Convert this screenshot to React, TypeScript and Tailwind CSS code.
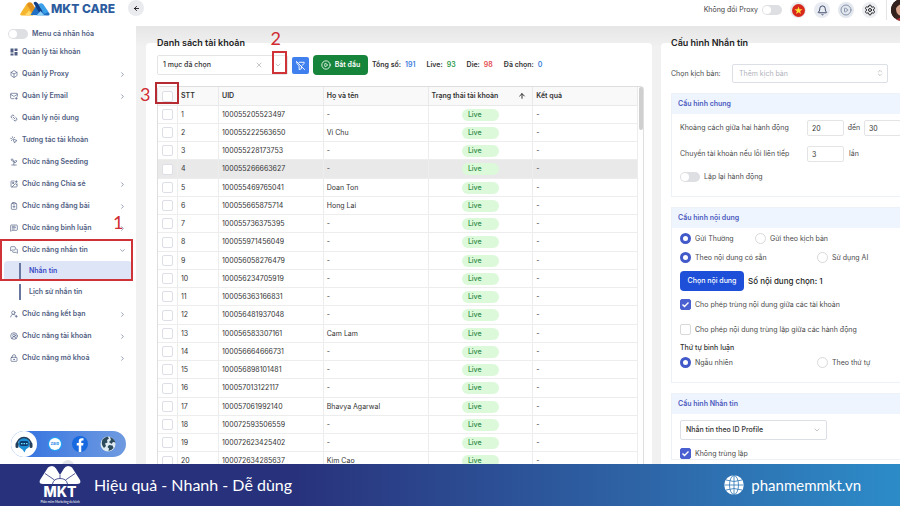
import type { ReactNode } from "react";
import {
  ArrowLeft,
  ArrowUp,
  Bell,
  Box,
  ChevronDown,
  ChevronRight,
  ChevronsUpDown,
  CirclePlay,
  CircleUserRound,
  ClipboardPlus,
  ImagePlus,
  Link2,
  LockKeyhole,
  MailPlus,
  MessageSquareText,
  MessagesSquare,
  MousePointerClick,
  Settings,
  Sprout,
  UserRoundPlus,
  X,
} from "lucide-react";

const menu = [
  { label: "Quản lý tài khoản", icon: <TilesIcon /> },
  { label: "Quản lý Proxy", icon: <Box className="size-2" />, more: true },
  { label: "Quản lý Email", icon: <MailPlus className="size-2" />, more: true },
  { label: "Quản lý nội dung", icon: <Link2 className="size-2 rotate-45" /> },
  { label: "Tương tác tài khoản", icon: <MousePointerClick className="size-2" /> },
  { label: "Chức năng Seeding", icon: <Sprout className="size-2 -scale-x-100" /> },
  { label: "Chức năng Chia sẻ", icon: <ImagePlus className="size-2" />, more: true },
  { label: "Chức năng đăng bài", icon: <ClipboardPlus className="size-2" />, more: true },
  { label: "Chức năng bình luận", icon: <MessageSquareText className="size-2" />, more: true },
];

const menuEnd = [
  { label: "Chức năng kết bạn", icon: <UserRoundPlus className="size-2" />, more: true },
  { label: "Chức năng tài khoản", icon: <CircleUserRound className="size-2" />, more: true },
  { label: "Chức năng mở khoá", icon: <LockKeyhole className="size-2" />, more: true },
];

const accounts = [
  ["100055205523497", "-"],
  ["100055222563650", "Vi Chu"],
  ["100055228173753", "-"],
  ["100055266663627", "-"],
  ["100055469765041", "Doan Ton"],
  ["100055665875714", "Hong Lai"],
  ["100055736375395", "-"],
  ["100055971456049", "-"],
  ["100056058276479", "-"],
  ["100056234705919", "-"],
  ["100056363166831", "-"],
  ["100056481937048", "-"],
  ["100056583307161", "Cam Lam"],
  ["100056664666731", "-"],
  ["100056898101481", "-"],
  ["100057013122117", "-"],
  ["100057061992140", "Bhavya Agarwal"],
  ["100072593506559", "-"],
  ["100072623425402", "-"],
  ["100072634285637", "Kim Cao"],
];

const stats = [
  { label: "Tổng số:", value: 191, color: "text-[#3b7de0]" },
  { label: "Live:", value: 93, color: "text-[#2f9a4c]" },
  { label: "Die:", value: 98, color: "text-[#e5484d]" },
  { label: "Đã chọn:", value: 0, color: "text-[#3b7de0]" },
];

function TilesIcon() {
  return (
    <svg viewBox="0 0 16 16" className="size-2" fill="currentColor">
      <path d="M1 1h6v8H1zM9 1h6v5H9zM1 11h6v4H1zM9 8h6v7H9z" />
    </svg>
  );
}

function FilterOffIcon() {
  return (
    <svg viewBox="0 0 24 24" className="size-[11px]" fill="none" stroke="currentColor" strokeWidth="2" strokeLinecap="round" strokeLinejoin="round">
      <path d="m3 3 18 18M9 5h11v1.500q0 .8-.6 1.400L15.500 12M14 14v5l-5 2v-8L4.500 8Q4 7.500 4 6.800V5" />
    </svg>
  );
}

function CareLogo() {
  return (
    <svg viewBox="0 0 60 32" className="h-4 w-[30px]">
      <path d="M1 25 13 6q4-6 9 0l10 15-6 8H4q-5 0-3-4z" fill="#f5b52c" />
      <path d="M17 3q6-2 9 4l7 11-6 9-13-19z" fill="#e0901f" />
      <path d="m9 29 9-10 8 10z" fill="#ffd970" />
      <path d="M21 28 32 10l8 9 6-9 13 15q1 4-4 4z" fill="#1f6fc4" />
      <path d="M27 4q4-5 9 1l10 14-6 7z" fill="#123f86" />
      <path d="M37 7q5-5 10 0l10 15-9 4z" fill="#3ba0ea" />
      <path d="m33 29 8-9 8 9z" fill="#8fd0f7" />
    </svg>
  );
}

function MktLogo() {
  return (
    <svg viewBox="0 0 84 36" className="h-[18px] w-[42px]">
      <path d="M18 3q3-3 8-3 5 0 8 5l8 13 8-13q3-5 8-5 5 0 8 3l16 25q3 8-6 8H8q-9 0-6-8z" fill="#fff" />
      <path d="M27 36q2-11 15-11t15 11M42 18v7M31 28 12 15M53 28l19-13" fill="none" stroke="#28327c" strokeWidth="1.6" />
    </svg>
  );
}

function GlobeGrid() {
  return (
    <svg viewBox="0 0 40 40" className="size-5" fill="none" stroke="#2a74b4" strokeWidth="1.6">
      <circle cx="20" cy="20" r="19.5" fill="#fff" stroke="none" />
      <ellipse cx="20" cy="20" rx="9" ry="19" />
      <path d="M20 1v38M1 20h38M4 10q16 6 32 0M4 30q16-6 32 0" />
    </svg>
  );
}

function Toggle({ label, className }: { label: string; className: string }) {
  return (
    <label className={"flex items-center " + className}>
      <input type="checkbox" role="switch" className="sr-only" />
      <span className="flex h-[10px] w-5 shrink-0 rounded-full bg-[#dedfe3] p-px">
        <span className="size-2 rounded-full bg-white" />
      </span>
      {label}
    </label>
  );
}

function Radio({ name, label, checked }: { name: string; label: string; checked?: boolean }) {
  return (
    <label className="flex items-center gap-1">
      <input
        type="radio"
        name={name}
        defaultChecked={checked}
        className="size-[11px] shrink-0 appearance-none rounded-full border border-[#d9d9d9] bg-white checked:border-[3px] checked:border-[#4259c9]"
      />
      {label}
    </label>
  );
}

function Check({ label, checked }: { label: string; checked?: boolean }) {
  return (
    <label className="flex h-[11px] items-center gap-1">
      <span className="relative flex size-[11px] shrink-0">
        <input
          type="checkbox"
          defaultChecked={checked}
          className="size-[11px] appearance-none rounded-xs border border-[#d9d9d9] bg-white checked:border-[#4a60d0] checked:bg-[#4a60d0]"
        />
        {checked && (
          <svg viewBox="0 0 11 11" className="pointer-events-none absolute inset-0" fill="none" stroke="#fff" strokeWidth="1.4">
            <path d="m2.500 5.500 2 2 4-4" />
          </svg>
        )}
      </span>
      {label}
    </label>
  );
}

function Card({ title, children }: { title: string; children: ReactNode }) {
  return (
    <section className="-mr-5 border border-[#edf1f8] bg-white">
      <h3 className="flex h-5 items-center bg-[#eff5ff] px-[6px] font-semibold text-[#4a59bd]">{title}</h3>
      {children}
    </section>
  );
}

function NumberBox({ label, value }: { label: string; value: number }) {
  return (
    <input
      aria-label={label}
      defaultValue={value}
      className="h-4 w-[37px] shrink-0 rounded-xs border border-[#e4e4e7] px-1 text-[#333]"
    />
  );
}

function MenuItem({ label, icon, more }: { label: string; icon: ReactNode; more?: boolean }) {
  return (
    <a href="#" className="flex h-[22px] items-center gap-1 px-[10px]">
      {icon}
      <span className="flex-1">{label}</span>
      {more && <ChevronRight className="size-[7px]" />}
    </a>
  );
}

function Sidebar() {
  return (
    <aside className="relative z-10 flex w-[136px] shrink-0 flex-col bg-white text-[7px] font-semibold text-[#4f5d82]">
      <div className="flex h-[18px] items-center gap-px pl-5">
        <CareLogo />
        <span className="text-[12px] font-extrabold text-[#2c5c9e]">MKT CARE</span>
      </div>
      <button
        aria-label="Thu gọn menu"
        className="absolute top-0 -right-2 flex size-4 items-center justify-center rounded-full bg-[#e9ebef] text-[#111]"
      >
        <ArrowLeft className="size-[7px]" strokeWidth={3} />
      </button>

      <Toggle label="Menu cá nhân hóa" className="mt-[11px] mb-[2px] gap-1 px-2" />

      <nav className="flex flex-col">
        {menu.map((item) => (
          <MenuItem key={item.label} {...item} />
        ))}
        <div className="relative">
          <a href="#" className="flex h-[22px] items-center gap-1 px-[10px]">
            <MessagesSquare className="size-2" />
            <span className="flex-1">Chức năng nhắn tin</span>
            <ChevronDown className="size-[7px]" />
          </a>
          <a href="#" className="mx-1 flex h-5 items-center rounded-sm bg-[#dde5f7] pl-[15px] text-[#3949c6]">
            <span className="flex h-4 items-center border-l-2 border-[#6877a0] pl-2">Nhắn tin</span>
          </a>
          <span className="pointer-events-none absolute inset-0 right-[3px] border-2 border-[#cf3338]" />
          <span className="absolute -top-[27px] left-[113px] font-['Lato'] text-[18px] leading-5 font-normal text-[#cf2b30]">1</span>
        </div>
        <a href="#" className="flex h-[22px] items-center pl-[19px]">
          <span className="flex h-4 items-center border-l-2 border-[#6877a0] pl-2">Lịch sử nhắn tin</span>
        </a>
        {menuEnd.map((item) => (
          <MenuItem key={item.label} {...item} />
        ))}
      </nav>

      <div className="mt-auto mr-[10px] mb-[7px] ml-[11px] flex h-[26px] items-center justify-between rounded-full bg-linear-to-r from-[#2f6fe0] to-[#6f9ae0] pr-[10px]">
        <a href="#" aria-label="Hỗ trợ" className="flex size-[26px] items-center justify-center rounded-full bg-white">
          <svg viewBox="0 0 36 36" className="size-[18px]">
            <circle cx="18" cy="17" r="12" fill="#1f8fd6" />
            <path d="M13 26h10l-4 9z" fill="#1f8fd6" />
            <path d="M4 19a14 14 0 0 1 28 0" fill="none" stroke="#233f5c" strokeWidth="3" />
            <rect x="1" y="15" width="6" height="11" rx="3" fill="#233f5c" />
            <rect x="29" y="15" width="6" height="11" rx="3" fill="#233f5c" />
            <rect x="9" y="12" width="18" height="10" rx="4" fill="#0d3d70" />
            <path d="M12 17h3m2 0h3m2 0h3" stroke="#6fe3ff" strokeWidth="2.5" />
          </svg>
        </a>
        <a
          href="#"
          className="flex size-3 items-center justify-center rounded-full bg-white text-[4px] font-bold text-[#1a86e8] ring-1 ring-[#1ea5f5]"
        >
          Zalo
        </a>
        <a href="#" aria-label="Facebook">
          <svg viewBox="0 0 32 32" className="size-4">
            <circle cx="16" cy="16" r="16" fill="#1769e0" />
            <path d="M13.500 32V19H9.500v-5h4v-3.500q0-6 6-6h3.500v4.500h-2.500q-2 0-2 2V14H23l-.8 5h-3.700v13z" fill="#fff" />
          </svg>
        </a>
        <a href="#" aria-label="Website">
          <svg viewBox="0 0 32 32" className="size-4">
            <circle cx="16" cy="16" r="15" fill="#dfeaf2" />
            <path
              d="M5 7q5-5 10-6l3 4-4 3 1 5-5 2 2 5-4 4Q1 17 5 7zM20 2q8 2 11 11l-5-1-3 4-5-4 4-4zM18 18l7 1 2 5q-5 6-10 6l1-5-3-3z"
              fill="#2d4a5c"
            />
          </svg>
        </a>
      </div>
      <span className="absolute -bottom-2 left-[62px] size-3 rounded-full bg-[#e2e4ea]" />
    </aside>
  );
}

function TopBar() {
  return (
    <header className="flex h-[26px] shrink-0 items-start justify-end overflow-hidden bg-white text-[#444]">
      <div className="-mr-[13px] flex h-5 items-center gap-2">
        <label className="flex items-center gap-1">
          Không đổi Proxy
          <input type="checkbox" role="switch" className="sr-only" />
          <span className="flex h-[10px] w-5 rounded-full bg-[#dedfe3] p-px">
            <span className="size-2 rounded-full bg-white" />
          </span>
        </label>
        <button aria-label="Ngôn ngữ" className="flex size-4 items-center justify-center rounded-full bg-[#e8eaee]">
          <svg viewBox="0 0 26 26" className="size-[13px]">
            <circle cx="13" cy="13" r="13" fill="#d8281e" />
            <path d="m13 5 2 5.700h6l-4.800 3.600 1.800 5.700-5-3.500L8 20l1.800-5.700L5 10.700h6z" fill="#ffdf3a" />
          </svg>
        </button>
        <button aria-label="Thông báo" className="flex size-4 items-center justify-center rounded-full bg-[#e8ebf1] text-[#2d3c5e]">
          <Bell className="size-[11px]" />
        </button>
        <button aria-label="Hướng dẫn" className="flex size-4 items-center justify-center rounded-full bg-[#e3e7ee] text-[#8793ac]">
          <CirclePlay className="size-3" />
        </button>
        <button aria-label="Cài đặt" className="flex size-4 items-center justify-center rounded-full bg-[#eceef2] text-[#222]">
          <Settings className="size-3" />
        </button>
        <span className="-mr-1 h-5 w-px bg-[#e4e4e7]" />
        <svg viewBox="0 0 22 22" className="size-[22px] rounded-full bg-[#3a2620]">
          <ellipse cx="11" cy="10" rx="6" ry="7" fill="#d9a68d" />
          <path d="M0 0h22v5Q10 2 5 9v6L3 22H0z" fill="#33211d" />
          <path d="M3 22q8-7 17 0z" fill="#b0303a" />
        </svg>
      </div>
    </header>
  );
}

function AccountList() {
  const head = "h-[19px] border-r border-b border-[#e9e9e9] bg-[#f9f9f9] px-[3px] text-left font-semibold";
  const cell = "h-[18px] border-r border-b border-[#ededed] px-[3px] group-nth-[4n]:h-[19px]";

  return (
    <section className="flex min-w-0 flex-1 flex-col rounded-t-sm bg-white pr-2 pl-[11px]">
      <h2 className="-mt-2 text-[9px] leading-4 font-semibold text-[#222]">Danh sách tài khoản</h2>

      <div className="mt-1 flex items-center gap-1">
        <div className="relative w-[131px]">
          <select
            aria-label="Danh mục"
            className="block h-5 w-full appearance-none rounded-xs border border-[#e4e4e7] pl-[5px] text-[7px] font-medium text-[#333]"
          >
            <option>1 mục đã chọn</option>
          </select>
          <X className="pointer-events-none absolute top-[6px] right-[25px] size-2 text-[#aaa]" />
          <ChevronDown className="pointer-events-none absolute top-[6px] right-[6px] size-2 text-[#aaa]" />
          <span className="pointer-events-none absolute -top-1 right-px h-[23px] w-[15px] border-2 border-[#cf3338]" />
          <span className="absolute -top-[27px] right-[7px] font-['Lato'] text-[18px] leading-5 text-[#cf2b30]">2</span>
        </div>
        <button aria-label="Bỏ lọc" className="flex size-[17px] shrink-0 items-center justify-center rounded-xs bg-[#3f80ee] text-white">
          <FilterOffIcon />
        </button>
        <button className="flex h-5 w-[55px] shrink-0 items-center justify-center gap-1 rounded-sm bg-[#16843a] font-semibold text-white">
          <CirclePlay className="size-[10px]" />
          Bắt đầu
        </button>
        <dl className="flex gap-[11px] font-semibold whitespace-nowrap">
          {stats.map(({ label, value, color }) => (
            <div key={label} className="flex gap-1">
              <dt>{label}</dt>
              <dd className={color}>{value}</dd>
            </div>
          ))}
        </dl>
      </div>

      <div className="relative mt-[11px] flex min-h-0 flex-1 rounded-t-sm border border-b-0 border-[#dedede]">
        <div className="min-w-0 flex-1 overflow-hidden">
          <table className="w-full table-fixed border-separate border-spacing-0">
            <colgroup>
              <col className="w-5" />
              <col className="w-[41px]" />
              <col />
              <col />
              <col />
              <col />
            </colgroup>
            <thead>
              <tr>
                <th className={head}>
                  <input
                    type="checkbox"
                    aria-label="Chọn tất cả"
                    className="mx-auto block size-[11px] appearance-none rounded-xs border border-[#dcdfe6] bg-white"
                  />
                </th>
                <th className={head}>STT</th>
                <th className={head}>UID</th>
                <th className={head}>Họ và tên</th>
                <th className={head}>
                  <span className="flex items-center justify-between pr-[3px]">
                    Trạng thái tài khoản
                    <ArrowUp className="size-2" strokeWidth={3} />
                  </span>
                </th>
                <th className={head}>Kết quả</th>
              </tr>
            </thead>
            <tbody>
              {accounts.map(([uid, name], i) => (
                <tr key={uid} className={i === 3 ? "group bg-[#e9e9e9]" : "group"}>
                  <td className={cell}>
                    <input
                      type="checkbox"
                      aria-label={"Chọn " + uid}
                      className="mx-auto block size-[11px] appearance-none rounded-xs border border-[#dcdfe6] bg-white"
                    />
                  </td>
                  <td className={cell}>{i + 1}</td>
                  <td className={cell}>{uid}</td>
                  <td className={cell}>{name}</td>
                  <td className={cell}>
                    <span className="mx-auto block h-3 w-[37px] rounded-full bg-[#dcf9da] px-[6px] leading-3 font-medium text-[#2f8a48]">
                      Live
                    </span>
                  </td>
                  <td className={cell}>-</td>
                </tr>
              ))}
            </tbody>
          </table>
        </div>
        <div className="w-[5px] shrink-0">
          <div className="ml-px h-[43px] w-1 rounded-full bg-[#cfcfcf]" />
        </div>
        <span className="pointer-events-none absolute -top-[5px] -left-[3px] h-[22px] w-6 border-2 border-[#b52b31]" />
        <span className="absolute -top-[3px] -left-[18px] font-['Lato'] text-[18px] leading-5 text-[#cf2b30]">3</span>
      </div>
    </section>
  );
}

function MessageConfig() {
  return (
    <section className="flex w-[239px] shrink-0 flex-col rounded-tl-sm bg-white pr-3 pl-[10px] text-[#4a4a4a]">
      <h2 className="-mt-2 text-[9px] leading-4 font-semibold text-[#222]">Cấu hình Nhắn tin</h2>

      <label className="mt-[13px] flex items-center justify-between">
        Chọn kịch bản:
        <span className="relative w-[156px]">
          <select className="block h-[19px] w-full appearance-none rounded-xs border border-[#dcdfe6] pl-[6px] text-[7px] text-[#b0b3bb]">
            <option>Thêm kịch bản</option>
          </select>
          <ChevronsUpDown className="pointer-events-none absolute top-[5px] right-1 size-2 text-[#aaa]" />
        </span>
      </label>

      <div className="mt-[10px] flex flex-col gap-[10px]">
        <Card title="Cấu hình chung">
          <div className="flex flex-col gap-[10px] px-2 pt-[6px] pb-[14px]">
            <div className="flex items-center">
              <span className="w-[127px] shrink-0">Khoảng cách giữa hai hành động</span>
              <NumberBox label="Khoảng cách từ" value={20} />
              <span className="w-5 shrink-0 text-center">đến</span>
              <NumberBox label="Khoảng cách đến" value={30} />
            </div>
            <div className="flex items-center">
              <span className="w-[127px] shrink-0">Chuyển tài khoản nếu lỗi liên tiếp</span>
              <NumberBox label="Số lỗi liên tiếp" value={3} />
              <span className="w-5 shrink-0 text-center">lần</span>
            </div>
            <Toggle label="Lặp lại hành động" className="gap-1" />
          </div>
        </Card>

        <Card title="Cấu hình nội dung">
          <div className="flex flex-col px-2 pt-px pb-[10px]">
            <div className="flex h-[19px] items-center">
              <div className="w-[75px]">
                <Radio name="kind" label="Gửi Thường" checked />
              </div>
              <Radio name="kind" label="Gửi theo kịch bản" />
            </div>
            <div className="flex h-[19px] items-center">
              <div className="w-[137px]">
                <Radio name="source" label="Theo nội dung có sẵn" checked />
              </div>
              <Radio name="source" label="Sử dụng AI" />
            </div>
            <div className="my-1 flex items-center gap-1">
              <button className="h-5 w-16 rounded-sm bg-[#1d4fd8] font-medium text-white">Chọn nội dung</button>
              <span className="text-[8px] font-medium text-[#222]">Số nội dung chọn: 1</span>
            </div>
            <div className="mt-1 flex flex-col gap-[14px]">
              <Check label="Cho phép trùng nội dung giữa các tài khoản" checked />
              <Check label="Cho phép nội dung trùng lặp giữa các hành động" />
            </div>
            <p className="mt-2 font-medium text-[#333]">Thứ tự bình luận</p>
            <div className="flex h-[19px] items-center">
              <div className="w-[137px]">
                <Radio name="order" label="Ngẫu nhiên" checked />
              </div>
              <Radio name="order" label="Theo thứ tự" />
            </div>
          </div>
        </Card>

        <Card title="Cấu hình Nhắn tin">
          <div className="flex flex-col gap-2 px-2 pt-[6px]">
            <div className="relative w-[147px]">
              <select
                aria-label="Kiểu nhắn tin"
                className="block h-5 w-full appearance-none rounded-xs border border-[#dcdfe6] pl-[5px] text-[7px] font-medium text-[#333]"
              >
                <option>Nhắn tin theo ID Profile</option>
              </select>
              <ChevronDown className="pointer-events-none absolute top-[6px] right-[6px] size-2 text-[#aaa]" />
            </div>
            <Check label="Không trùng lặp" checked />
          </div>
        </Card>
      </div>
    </section>
  );
}

export default function App() {
  return (
    <div className="flex h-screen flex-col overflow-hidden bg-[#ededed] font-['Inter','Noto_Sans',sans-serif] text-[7px] leading-[10px] text-[#333]">
      <div className="flex min-h-0 flex-1 overflow-hidden">
        <Sidebar />
        <div className="flex min-w-0 flex-1 flex-col">
          <TopBar />
          <main className="flex min-h-0 flex-1 gap-[9px] bg-linear-to-b from-[#e6e6e6] to-[#f1f1f1] to-5% pt-[17px] pl-[10px]">
            <AccountList />
            <MessageConfig />
          </main>
        </div>
      </div>

      <footer className="z-20 flex h-[42px] shrink-0 items-center justify-between bg-linear-to-r from-[#28327c] from-33% to-[#2c8cc8] px-[39px] font-['Lato','Noto_Sans',sans-serif] leading-5 text-white">
        <div className="flex items-center gap-[13px]">
          <div className="flex flex-col items-center">
            <MktLogo />
            <span className="font-['Inter'] text-[14px] leading-4 font-extrabold">MKT</span>
            <span className="text-[3px] leading-1">Phần mềm Marketing đa kênh</span>
          </div>
          <p className="text-[16px]">Hiệu quả - Nhanh - Dễ dùng</p>
        </div>
        <a href="#" className="flex items-center gap-[7px] text-[15px]">
          <GlobeGrid />
          phanmemmkt.vn
        </a>
      </footer>
    </div>
  );
}
